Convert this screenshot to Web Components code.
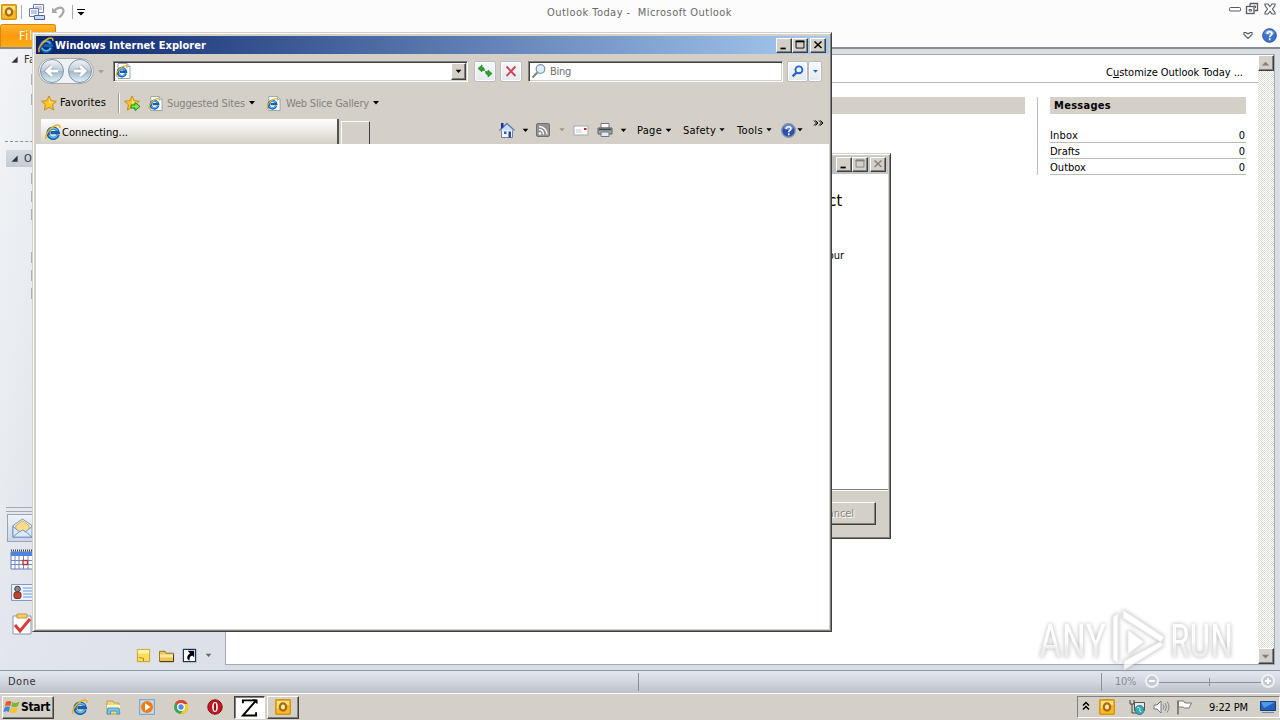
<!DOCTYPE html>
<html lang="en"><head><meta charset="utf-8"><title>Desktop</title>
<style>html,body{margin:0;width:1280px;height:720px;overflow:hidden}body{font:11px/14px "DejaVu Sans Condensed","DejaVu Sans",sans-serif;font-stretch:condensed;color:#000}</style></head>
<body><desk-top></desk-top>
<script>
const def=(name,css,html)=>customElements.define(name,class extends HTMLElement{
 connectedCallback(){if(this.shadowRoot)return;this.attachShadow({mode:'open'}).innerHTML='<style>*{box-sizing:border-box}:host{box-sizing:border-box;flex:none;display:block}'+css+'</style>'+(typeof html==='function'?html(this):html);}
});

/* Text label tracked to an exact width */
customElements.define('ui-label',class extends HTMLElement{
 connectedCallback(){if(this.shadowRoot)return;
  const r=this.attachShadow({mode:'open'});
  r.innerHTML='<style>:host{display:block;flex:none;white-space:nowrap}span{display:inline-block;white-space:nowrap}</style><span><slot></slot></span>';
  const w=+this.getAttribute('w'),s=r.querySelector('span');
  if(w){const n=this.textContent.length,d=(w-s.getBoundingClientRect().width)/n;s.style.letterSpacing=d.toFixed(3)+'px';this.style.width=w+'px';}
 }});

const e='<path d="M13.200 10.800A5.200 5.200 0 1 1 13.400 8.600H5.500" fill="none" stroke="#1a5cae" stroke-width="3.200"/><path d="M12.600 10.800A4.700 4.700 0 0 1 4 11M4 6.500a5 5 0 0 1 8.500 0" fill="none" stroke="#4fc0f4" stroke-width="1.500"/><path d="M1.500 15C-.8 12.500 3.500 5 9.500 2c3.200-1.600 6-1.300 5.300 1.800" fill="none" stroke="#e8b21c" stroke-width="1.500"/>';
const page='<path d="M3 .5h9l3 3v12H3z" fill="#fff" stroke="#9aa0aa"/><path d="M12 .5v3h3" fill="#dde" stroke="#9aa0aa"/><g transform="translate(.5 2) scale(.78)">'+e+'</g>';
const star='<path d="M8 1l2.200 4.700 5.200.6-3.800 3.500 1 5.200L8 12.400 3.400 15l1-5.200L.6 6.300l5.200-.6z" fill="#fdc52b" stroke="#cf8a10"/><path d="M8 3l1.400 3.500 3.400.4-4.800 1.600z" fill="#ffe98c"/>';
const I={
 ie:e,page,star,
 tri:'<path d="M5 6h6l-3 3.500z" fill="currentColor"/>',
 addstar:star+'<path d="M7 10h4V7.500l5 4-5 4V13H7z" fill="#7bea4c" stroke="#16901c"/>',
 outlook:'<rect x=".7" y=".7" width="14.600" height="14.600" rx="1" fill="#fbb92c" stroke="#d8940d" stroke-width="1.400"/><path d="M2 2h12v4Q8 6 2 10z" fill="#ffe08a"/><ellipse cx="8" cy="8" rx="3.200" ry="3.600" fill="#ffe9ac" stroke="#a86c0c" stroke-width="2.300"/>',
 sendrec:'<path d="M4.500.5h10v8h-10z" fill="#fff" stroke="#6b7daa"/><path d="M6 3h7M6 5h7" stroke="#8d9cc6"/><path d="M.5 4.500h9v8h-9z" fill="#f4f7ff" stroke="#6b7daa"/><path d="M2 7h6M2 9h6" stroke="#8d9cc6"/><path d="M5.500 11.500h10v4h-10z" fill="#cfd9f2" stroke="#4a62a4"/>',
 undo:'<path d="M6.500 9H1V3.500z" fill="#a6a8ac"/><path d="M3 7.500C6 2.500 12.500 2.500 12.500 6.500c0 3-2 5-4.500 7" fill="none" stroke="#a6a8ac" stroke-width="2.200"/>',
 qat:'<path d="M4 5.500h8" stroke="#000"/><path d="M4.500 8h7L8 11.500z" fill="#000"/>',
 search:'<circle cx="9.500" cy="6" r="4.300" fill="#d9f0ff" stroke="#8996a4" stroke-width="1.300"/><path d="M6.300 9.500L1.500 14.500" stroke="#7e8790" stroke-width="2.200"/>',
 searchb:'<circle cx="9.500" cy="6.200" r="3.700" fill="#eef8ff" stroke="#2763cf" stroke-width="2"/><path d="M6.800 9.200L2.800 13.200" stroke="#2763cf" stroke-width="2.500"/>',
 refresh:'<path d="M1 5.500L5 2v2.200q2.500 0 2.500 3.300H5.700Q5.700 6 5 6v2.800zM15 10.500L11 14v-2.200q-2.500 0-2.500-3.300h1.800q0 1.500.7 1.500V7.200z" fill="#2fa52d" stroke="#1a7f20" stroke-width=".7"/>',
 stop:'<path d="M3.500 3.500l9 9.500M12.500 3.500l-9 9.500" stroke="#cf4550" stroke-width="1.900"/>',
 home:'<path d="M2.500 8v7.500h11V8" fill="#f0f5ff" stroke="#7282a0"/><path d="M.5 8.500L8 1.500l7.500 7" fill="#c8dcf8" stroke="#5a79b0" stroke-width="1.300"/><path d="M2 1h2.500v4L2 7z" fill="#1c2ea8"/><path d="M5 9.500h2.500V12H5z" fill="#42588e"/><path d="M9.500 9.500H12v6H9.500z" fill="#27479a"/>',
 rss:'<rect x="1.500" y="1.500" width="13" height="13" rx="1.500" fill="#929292" stroke="#707070"/><circle cx="5" cy="11.500" r="1.300" fill="#fff"/><path d="M4 7.500a4.500 4.500 0 0 1 4.500 5M4 4.500a8 8 0 0 1 8 8" fill="none" stroke="#fff" stroke-width="1.400"/>',
 mail:'<rect x="1" y="4" width="14" height="9" fill="#fff" stroke="#a8a8a8"/><path d="M3 8h5M3 10h6" stroke="#ccc"/><path d="M11 6h2.500v2H11z" fill="#c22"/>',
 printer:'<path d="M4 1.500h8V6H4z" fill="#fff" stroke="#777"/><path d="M1 6h14v6H1z" fill="#a4a8ac" stroke="#5c6066"/><path d="M2 7.500h12" stroke="#444" stroke-width="1.500"/><path d="M4 10h8v4.500H4z" fill="#d8ebff" stroke="#777"/>',
 help:'<circle cx="8" cy="8" r="7.300" fill="#3c72c8" stroke="#2b509a"/><path d="M2.500 5.500a6 6 0 0 1 11 0Q8 9 2.500 5.500z" fill="#7ba5e8"/><path d="M5.600 6.300c0-3.200 5-3 5-.2 0 1.800-2.400 1.800-2.400 3.700M8.200 11v2" fill="none" stroke="#fff" stroke-width="1.800"/>',
 helpd:'<circle cx="8" cy="8" r="7.200" fill="#2e4fae" stroke="#8191b0" stroke-width="1.400"/><path d="M2.500 5.500a6 6 0 0 1 11 0Q8 9 2.500 5.500z" fill="#6f8ed8"/><path d="M5.600 6.300c0-3.200 5-3 5-.2 0 1.800-2.400 1.800-2.400 3.700M8.200 11v2" fill="none" stroke="#fff" stroke-width="1.700"/>',
 chev:'<path d="M3 4.500l2.500 2.500L3 9.500M4.500 4.500l2.500 2.500-2.500 2.500M8 4.500l2.500 2.500L8 9.500M9.500 4.500L12 7 9.500 9.500" fill="none" stroke="#000"/>',
 min:'<path d="M4 12h6" stroke="currentColor" stroke-width="2"/>',
 max:'<path d="M3.500 3.500h9v8h-9z" fill="none" stroke="currentColor"/><path d="M3 4h10" stroke="currentColor" stroke-width="2"/>',
 close:'<path d="M4 4l8 7.500M12 4l-8 7.500" stroke="currentColor" stroke-width="1.700"/>',
 omin:'<rect x="2.500" y="6.500" width="11" height="3.500" rx="1" fill="#fff" stroke="#555a64"/>',
 orest:'<path d="M6 2.500h7.500v7h-3M6 2.500v2.500" fill="none" stroke="#555a64" stroke-width="1.300"/><rect x="2.500" y="5.500" width="7.500" height="7" fill="#fff" stroke="#555a64" stroke-width="1.300"/><path d="M5 8.500h2.500v1.500H5zM10 5h1.500v2" fill="none" stroke="#555a64"/>',
 oclose:'<path d="M3 3h3l2 2.500L10 3h3v1.500L10.500 8l2.500 3.500V13h-3l-2-2.500L6 13H3v-1.500L5.500 8 3 4.500z" fill="#fff" stroke="#555a64" stroke-width="1.100"/>',
 heart:'<path d="M4 4.500h2l2 1.500 2-1.500h2v2L8 10.500 4 6.500z" fill="#fff" stroke="#555a64" stroke-width="1.100"/>',
 bmail:'<path d="M1 8L11 1l10 7v12H1z" fill="#f4f8ff" stroke="#6f8fbe"/><path d="M4 8l7-5 7 5v5l-7 3-7-3z" fill="#ffdc8c" stroke="#d8a84c"/><path d="M1 9l7 5.500 3-2 3 2L21 9v11H1z" fill="#dcebfb" stroke="#6f8fbe"/><path d="M1 20l7-6M21 20l-7-6" stroke="#6f8fbe"/>',
 bcal:'<path d="M0 3h22v17H0z" fill="#fff" stroke="#5d7ec0"/><path d="M0 3h22v4H0z" fill="#4e83de"/><path d="M0 1.500h22" stroke="#444" stroke-width="2" stroke-dasharray="1 1"/><path d="M4 7v13M8 7v13M12.500 7v13M17 7v13M0 11.500h22M0 15.500h22" stroke="#7188bd"/><rect x="12" y="11.500" width="4.500" height="4" fill="#fff" stroke="#c5342c" stroke-width="1.400"/>',
 bcon:'<path d="M.5 3.500h22v16H.5z" fill="#edf4ff" stroke="#8497bd"/><path d="M12 7h9M12 10h9M12 13h9M12 16h9" stroke="#6c95dc"/><circle cx="6.500" cy="8" r="2.800" fill="#888" stroke="#444"/><rect x="3" y="11" width="7" height="6.500" rx="2" fill="#ba4830" stroke="#803022"/>',
 btask:'<path d="M2 3h18v18H2z" fill="#fff" stroke="#8793ae"/><path d="M6 1h10v4H6z" fill="#f4cf6c" stroke="#c8963a"/><path d="M4 12l5 6 10-12" fill="none" stroke="#d93b38" stroke-width="3"/>',
 note:'<path d="M1.500 1.500h13v13h-13z" fill="#ffdd58" stroke="#c79e26"/><path d="M2 2h12v4H2z" fill="#fff2a8"/><path d="M3 10l5 1v3" fill="none" stroke="#b28318"/>',
 folder:'<path d="M.5 3.500h6l1 2h8v9H.5z" fill="#f0c450" stroke="#8b712a"/><path d="M1 7h14v3H1z" fill="#ffe9a0"/><path d="M1 14.500h14.500V7" fill="none" stroke="#3c3620"/>',
 shortcut:'<rect x="1.500" y="1.500" width="13" height="13" fill="#fff" stroke="#15375e" stroke-width="1.300"/><path d="M6 3h7v7l-2-2c-3 1-3 3-3 5.500C4.500 12 5 8 8.500 5.500z" fill="#000"/>',
 explorer:'<path d="M2 2h6l1 2h5v11H2z" fill="#f0d782" stroke="#b7a04e"/><path d="M2 6h13v3H2z" fill="#fff7c4"/><path d="M3 9h10.500l1.500 6h-3v-3H5.500v3H2z" fill="#7cc8ee" stroke="#4599c4"/>',
 wmp:'<rect x=".7" y=".7" width="14.600" height="14.600" fill="#c4ddf8" stroke="#6d9cce"/><circle cx="8" cy="8" r="6" fill="#f37c0b"/><path d="M6 4.300L11.500 8 6 11.700z" fill="#fff"/>',
 chrome:'<circle cx="8" cy="8" r="7" fill="#3ba650"/><path d="M8 8L2 4.500A7 7 0 0 1 14.500 5H8z" fill="#e0442f"/><path d="M14.500 5A7 7 0 0 1 7.500 15L11 9.500V5z" fill="#f9cb26"/><circle cx="8" cy="8" r="3.300" fill="#4b8cf4" stroke="#fff" stroke-width="1.300"/>',
 opera:'<circle cx="8" cy="8" r="7.200" fill="#c8141e" stroke="#7e0c12"/><ellipse cx="8" cy="8" rx="2.800" ry="5" fill="#fff"/><ellipse cx="8" cy="8" rx="1.200" ry="4" fill="#a00c18"/>',
 zed:'<path d="M2 4.500V1.500h13.500M16.500 1L2 17.500h14V14" fill="none" stroke="#000" stroke-width="2"/><path d="M11.500.5h6v5z" fill="#000"/>',
 up2:'<path d="M5 6.500L8 3.500l3 3M5 10.500L8 7.500l3 3" fill="none" stroke="#000" stroke-width="1.500"/>',
 net:'<path d="M5.500 3.500h10v8h-10z" fill="#e9eaec" stroke="#555"/><path d="M1 1v4h4V1M3 5v9h5" fill="none" stroke="#444"/><circle cx="10.500" cy="11" r="4.500" fill="#3ba8b4" stroke="#2b7e8e"/><path d="M8 9c2-2 4 1 2.500 3l2 1" stroke="#baf0ee" fill="none"/>',
 vol:'<path d="M1 6h3l4-4v12l-4-4H1z" fill="#fff" stroke="#777"/><path d="M10 5.500q2 2.500 0 5M12 4q3 4 0 8M14 2.500q4 5.500 0 11" fill="none" stroke="#888"/>',
 flag:'<path d="M2 1.500v14" stroke="#666" stroke-width="1.500"/><path d="M2.500 2h5l1.500 2h6.500l-2.500 5H8.500L7 8H2.500z" fill="#fff" stroke="#777"/>',
 desk:'<path d="M.5 2.500h15v9H.5z" fill="#2061bd" stroke="#173e7e"/><path d="M1 3h14L4 9z" fill="#4f9be5"/><path d="M2 13.500h12" stroke="#7a86a0"/>',
 win:'<path d="M2 3q3-2 5.500-.3L6.300 7.200Q4 5.500.8 7.500z" fill="#e8562a"/><path d="M8.500 3q3 2 7-.5L14 7q-3.500 2.200-6.700.4z" fill="#7cb932"/><path d="M.6 8.500Q3.500 6.700 6 8.300L4.800 13q-2.500-1.800-5.500.2z" fill="#3f87d8"/><path d="M7 8.500q3 1.700 6.700-.3l-1.200 4.700q-3.500 2-6.700.3z" fill="#fbc224"/>',
 exp:'<path d="M11 4v7H4z" fill="#333"/>',
 sup:'<path d="M4 10l4-4 4 4z" fill="#808080"/>',sdown:'<path d="M4 6h8l-4 4z" fill="#808080"/>',
};
def('ui-icon','svg{display:block;width:100%;height:100%;overflow:visible}',t=>{const s=+(t.getAttribute('s')||16),v=+(t.getAttribute('v')||16);t.style.width=t.style.height=s+'px';return `<svg viewBox="0 0 ${v} ${v}">${I[t.getAttribute('n')]}</svg>`});
const ic=(n,ml=0,s=16,v=16,x='')=>`<ui-icon n="${n}" s="${s}" v="${v}" style="margin-left:${ml}px;${x}"></ui-icon>`;
const tx=(t,w,ml=0,x='')=>`<ui-label w="${w}" style="margin-left:${ml}px;${x}">${t}</ui-label>`;

def('win-button',':host{width:16px;height:15px;background:#d4d0c8;border:1px solid;border-color:#fff #404040 #404040 #fff;box-shadow:inset -1px -1px #808080}','<slot></slot>');
def('scroll-bar',':host{width:16px;display:flex;flex-direction:column;justify-content:space-between;background:repeating-conic-gradient(#dedbd5 0 25%,#fff 0 50%) 0 0/2px 2px}','<win-button style="height:16px">'+ic('sup',-1,15)+'</win-button><win-button style="height:16px">'+ic('sdown',-1,15)+'</win-button>');
def('title-buttons',':host{display:flex}',t=>{const c=t.hasAttribute('dim')?'#808080':'#000';return ['min','max','close'].map((n,i)=>`<win-button style="color:${n=='min'?'#000':c};${i==2?'margin-left:2px':''}">${ic(n,0,14,16,'margin-top:-1px')}</win-button>`).join('')});

/* Outlook title and ribbon tabs */
def('outlook-head',`:host{height:49px;background:#fcfcfd;border-bottom:2px solid #888c92}.t{height:24px;display:flex;align-items:center;color:#6a6a6a}.sep{width:1px;height:14px;background:#aaa}.r{height:23px;display:flex;align-items:center;justify-content:space-between}.file{width:56px;height:23px;border-radius:3px 3px 0 0;border:1px solid #dc850c;border-bottom:0;background:linear-gradient(#ffb52d,#f99a0c 50%,#ffab16);color:#fff;display:flex;align-items:center}.i{display:flex;align-items:center;padding-right:3px}.w{display:flex;margin-top:-6px}`,
`<div class="t">${ic('outlook',1)}<div class="sep" style="margin-left:4px"></div>${ic('sendrec',7)}${ic('undo',6)}<div class="sep" style="margin-left:5px"></div>${ic('qat')}${tx('Outlook Today - &nbsp;Microsoft Outlook',185,458,'margin-top:1px')}<div class="w">${ic('omin',495)}${ic('orest',1)}${ic('oclose',2)}</div></div>
<div class="r"><div class="file">${tx('File',22,18,'font-size:12px')}</div><div class="i">${ic('heart')}${ic('help',6,15)}</div></div>`);

def('nav-pane',`:host{width:225px;display:flex;flex-direction:column;background:linear-gradient(100deg,#f2f4f7,#e2e6ec 35%,#dde0e6)}.f{display:flex;height:18px;align-items:center;color:#333;padding-left:7px}.b{width:6px;height:11px;background:#aeb2b6;margin-left:31px;flex:none}.m{display:flex;flex-direction:column}.d{border-top:1px dashed #8b919b;margin:36px 0 8px 5px}.o{background:linear-gradient(#d4dae2,#c5ccd5);margin-left:6px;padding-left:1px;height:17px}.s{height:5px;border:1px solid #a3aab6;border-width:1px 0;margin-left:6px}.sel{margin:2px 20px 0 7px;height:28px;border:1px solid #9ba4b4;background:linear-gradient(#eff3f9,#cdd6e4);display:flex;align-items:center}.foot{display:flex;align-items:center;padding-left:136px;height:24px;color:#666}`,
`<div class="m"><div class="f" style="margin-top:2px">${ic('exp',1,14)}${tx('Favorites',48,2)}</div><div class="b" style="margin-top:5px"></div><div class="b" style="margin-top:9px"></div></div>
<div class="d"></div><div class="f o">${ic('exp',1,14)}${tx('Outlook Data File',95,2)}</div>
<div class="m">${[6,7,7,32,7,7].map(m=>`<div class="b" style="margin-top:${m}px"></div>`).join('')}</div>
<div class="s" style="margin-top:208px"></div><div class="sel">${ic('bmail',4,21,22)}</div>${ic('bcal',11,22,22,'margin-top:7px')}${ic('bcon',11,22,22,'margin-top:10px')}${ic('btask',11,22,22,'margin-top:10px')}
<div class="foot" style="margin-top:8px">${ic('note',0,15)}${ic('folder',8,15)}${ic('shortcut',8,15)}${ic('tri',4,15)}</div>`);

def('message-row',':host{display:flex;justify-content:space-between;height:16px;border-bottom:1px solid #bcbcbc;padding:2px 1px 0 0}','<slot></slot>');
def('today-pane',`:host{flex:1;display:flex;background:#fff;border:1px solid #a3aab3}.c{flex:1;display:flex;flex-direction:column}.h{height:28px;border-bottom:1px solid #b9b9b9;display:flex;align-items:center;justify-content:flex-end;padding:8px 15px 0 0}.cols{display:flex;padding-top:14px}.bar{height:17px;background:#d4d0c8;width:799px}.v{width:1px;height:78px;background:#bbb;margin:0 12px}.msg{width:196px}.mh{height:17px;background:#d4d0c8;padding:2px 4px;margin-bottom:13px;font-weight:bold}`,
`<div class="c"><div class="h">${tx('C<u>u</u>stomize Outlook Today ...',137)}</div><div class="cols"><div class="bar"></div><div class="v"></div><div class="msg"><div class="mh">${tx('Messages',57)}</div>${[['Inbox',28],['Drafts',30],['Outbox',36]].map(a=>`<message-row>${tx(a[0],a[1])}<ui-label>0</ui-label></message-row>`).join('')}</div></div></div><scroll-bar></scroll-bar>`);
def('status-bar',`:host{height:23px;border-top:1px solid #8e98a7;background:linear-gradient(#e3e7ee,#d2d6de 50%,#babfc8);display:flex;align-items:center;color:#333}.v{width:1px;height:18px;background:#8c93a0}.z{width:14px;height:14px;border:2px solid #f1f2f5;border-radius:50%;background:#c3c8d1}.z svg{display:block}.l{height:1px;background:#8b919b}`,
`${tx('Done',28,8)}<div class="v" style="margin-left:602px"></div><div class="v" style="margin-left:462px"></div>${tx('10%',21,13,'color:#8a8d95')}<div class="z" style="margin-left:9px;margin-top:-2px"><svg width="10" height="10"><path d="M2 5h6" stroke="#fff" stroke-width="2"/></svg></div><div class="l" style="width:50px"></div><div class="v" style="height:8px"></div><div class="l" style="width:51px"></div><div class="z" style="margin-top:-2px"><svg width="10" height="10"><path d="M2 5h6M5 2v6" stroke="#fff" stroke-width="2"/></svg></div>`);
def('outlook-window',`:host{height:693px;display:flex;flex-direction:column;background:#d9dee5}.b{flex:1;display:flex;min-height:0}.p{flex:1;display:flex;padding:5px 5px 5px 0}`,`<outlook-head></outlook-head><div class="b"><nav-pane></nav-pane><div class="p"><today-pane></today-pane></div></div><status-bar></status-bar>`);

const frame='border:1px solid;border-color:#d4d0c8 #404040 #404040 #d4d0c8;box-shadow:inset 1px 1px #fff,inset -1px -1px #808080;background:#d4d0c8;padding:2px;display:flex;flex-direction:column;';
def('setup-dialog',`:host{${frame}}.t{height:18px;background:linear-gradient(90deg,#808080,#c8c8c8);display:flex;justify-content:flex-end;padding:1px 2px 2px 2px}.b{height:316px;background:#fff;border-bottom:1px solid #808080;display:flex;flex-direction:column;align-items:flex-end}.f{flex:1;border-top:1px solid #fff;display:flex;justify-content:flex-end;padding:11px 12px 0}.btn{width:74px;height:23px;border:1px solid;border-color:#fff #404040 #404040 #fff;box-shadow:inset -1px -1px #808080;display:flex;align-items:center;justify-content:center;color:#8a8884;text-shadow:1px 1px #fff}`,
`<div class="t"><title-buttons dim></title-buttons></div><div class="b">${tx('connect',57,0,'margin:17px 46px 0 0;font:16px/20px DejaVu Sans Condensed,sans-serif')}${tx('your',22,0,'margin:38px 44px 0 0')}</div><div class="f"><div class="btn">${tx('Cancel',33,-3)}</div></div>`);

def('ie-nav',`:host{height:34px;display:flex;align-items:center}.pair{display:flex;gap:4px;background:#eff2f5;border:1px solid #a6a8ad;border-radius:13px;height:26px;align-items:center;padding:0 1px;margin-left:2px}.o{width:24px;height:24px;border-radius:50%;border:1px solid #8490a0;background:linear-gradient(#f0f4f8,#bfcbd8 48%,#a5b8ca 52%,#d9f2fc)}.o svg{display:block}.in{height:21px;background:#fff;border:1px solid;border-color:#808080 #fff #fff #808080;box-shadow:inset 1px 1px #404040,inset -1px -1px #d4d0c8;display:flex;align-items:center}.q{height:21px;width:22px;border:1px solid #b9bdc3;border-radius:2px;background:linear-gradient(#f7f9fa,#e4e9ed);display:flex;align-items:center;justify-content:center;box-shadow:inset 0 0 0 1px #fff}.dd{width:15px;height:17px;background:#d4d0c8;border:1px solid;border-color:#fff #404040 #404040 #fff;box-shadow:inset -1px -1px #808080;margin-left:auto;margin-right:1px}`,
`<div class="pair">${['M11 6L6 11l5 5M6 11H17','M11 6l5 5-5 5M16 11H5'].map(d=>`<div class="o"><svg width="22" height="22"><path d="${d}" fill="none" stroke="#8b99a8" stroke-width="4.300"/><path d="${d}" fill="none" stroke="#fff" stroke-width="3"/></svg></div>`).join('')}</div>${ic('tri',-1,15,15,'color:#a5a39f')}
<div class="in" style="width:355px;margin-left:5px">${ic('page',1)}<div class="dd">${ic('tri',-1,15)}</div></div><div class="q" style="margin-left:6px">${ic('refresh')}</div><div class="q" style="margin-left:4px">${ic('stop')}</div>
<div class="in" style="width:255px;margin-left:6px">${ic('search',2)}${tx('Bing',21,3,'color:#6d6d6d;padding-top:2px')}</div><div class="q" style="margin-left:4px;width:21px">${ic('searchb',0,15)}</div><div class="q" style="width:14px;color:#2763cf">${ic('tri',0,13)}</div>`);
def('favorites-bar',`:host{height:30px;display:flex;align-items:center;padding-left:5px}.s{width:1px;height:20px;background:#9c9993;box-shadow:1px 0 #fff}`,
`${ic('star')}${tx('Favorites',46,3)}<div class="s" style="margin-left:12px"></div>${ic('addstar',5)}${ic('page',8,15)}${tx('Suggested Sites',78,4,'color:#85827e;padding-top:1px')}${ic('tri',-1)}${ic('page',6,15)}${tx('Web Slice Gallery',83,5,'color:#85827e;padding-top:1px')}${ic('tri',-1)}`);
def('tab-row',`:host{height:26px;display:flex;align-items:flex-end;padding-left:5px}.tab{width:298px;height:25px;background:linear-gradient(#fff,#f0eeea 40%,#d4d0c8);border-right:2px solid #55524e;display:flex;align-items:center}.new{width:29px;height:23px;margin-left:2px;border:1px solid #fff;border-right:1px solid #404040;border-bottom:0}.c{display:flex;align-items:center;height:28px;flex:1;align-self:flex-end}.c ui-label{padding-top:1px}`,
`<div class="tab">${ic('ie',4)}${tx('Connecting...',66,1,'padding-top:2px')}</div><div class="new"></div><div class="c">${ic('home',129)}${ic('tri',3,15)}${ic('rss',2)}${ic('tri',4,14,16,'color:#9b9894')}${ic('mail',4)}${ic('printer',8)}${ic('tri',3,15)}${tx('Page',25,6)}${ic('tri',-1,15)}${tx('Safety',33,7)}${ic('tri',-1,14)}${tx('Tools',26,8)}${ic('tri',-1,14)}${ic('helpd',5,15)}${ic('tri',-3,14)}${ic('chev',4,14,14,'margin-top:-14px')}</div>`);
def('ie-window',`:host{${frame}padding:3px 2px 2px 3px}.t{height:18px;background:linear-gradient(90deg,#0a246a,#a6caf0);display:flex;align-items:center;color:#fff;font-weight:bold}.v{flex:1;background:#fff}title-buttons{margin-left:auto;margin-right:3px}.t ui-label{padding-top:1px}`,
`<div class="t">${ic('ie',2)}${tx('Windows Internet Explorer',151,1)}<title-buttons></title-buttons></div><ie-nav></ie-nav><favorites-bar></favorites-bar><tab-row></tab-row><div class="v"></div>`);

def('task-bar',`:host{height:27px;background:#d4d0c8;border-top:1px solid #fff;display:flex;align-items:center}.b{height:23px;border:1px solid;border-color:#fff #404040 #404040 #fff;box-shadow:inset -1px -1px #808080;display:flex;align-items:center}.p{border-color:#404040 #fff #fff #404040;background:#fff;box-shadow:inset 1px 1px #808080}.tray{height:22px;width:203px;margin-left:auto;border:1px solid;border-color:#808080 #fff #fff #808080;display:flex;align-items:center}`,
`<div class="b" style="width:52px;margin-left:2px;font-weight:bold;font-size:12px">${ic('win',1)}${tx('Start',29,1)}</div>${ic('ie',18)}${ic('explorer',17)}${ic('wmp',18)}${ic('chrome',18)}${ic('opera',18)}<div class="b p" style="width:31px;margin-left:11px">${ic('zed',6,17,18)}</div><div class="b" style="width:32px;margin-left:2px">${ic('outlook',7)}</div>
<div class="tray">${ic('up2',0)}${ic('outlook',5)}${ic('net',14)}${ic('vol',8)}${ic('flag',7)}${tx('9:22 PM',39,17,'padding-top:1px')}${ic('desk',12)}</div>`);

def('any-run-mark',`:host{opacity:.75}svg{display:block;filter:drop-shadow(0 0 2px #999)}`,
`<svg width="220" height="68" viewBox="0 0 220 68"><defs><linearGradient id="g" x2="0" y2="1"><stop offset=".5" stop-color="#fff"/><stop offset=".65" stop-color="#e8e8ea"/></linearGradient></defs><g font-family="Roboto" font-size="46" fill="url(#g)"><text x="3" y="49" textLength="67" lengthAdjust="spacingAndGlyphs">ANY</text><text x="134" y="49" textLength="63" lengthAdjust="spacingAndGlyphs">RUN</text></g><path d="M87 2L128 29 125 34 87 10zM77 9l5-4v50l-5-3zM92 22v24l16-12zM88 53l36-19 4 3-40 25z" fill="#fff" stroke="#e4e4e4"/></svg>`);
def('desk-top',`:host{position:relative;width:1280px;height:720px;overflow:hidden}setup-dialog{position:absolute;left:391px;top:153px;width:500px;height:386px}ie-window{position:absolute;left:32px;top:32px;width:800px;height:600px}any-run-mark{position:absolute;left:1036px;top:608px}`,
`<outlook-window></outlook-window><task-bar></task-bar><setup-dialog></setup-dialog><ie-window></ie-window><any-run-mark></any-run-mark>`);
</script></body></html>
